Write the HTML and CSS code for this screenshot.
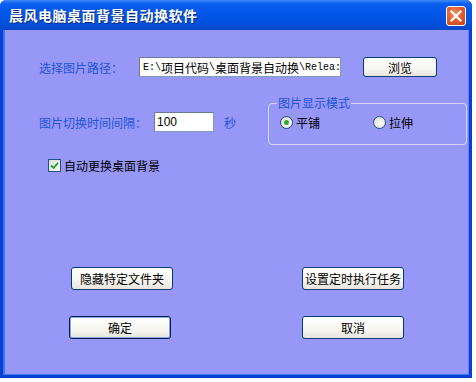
FILE: index.html
```html
<!DOCTYPE html>
<html lang="zh">
<head>
<meta charset="utf-8">
<link rel="stylesheet" href="styles.css">
</head>
<body>
<div class="window">
  <div class="titlebar">
    <span class="title">晨风电脑桌面背景自动换软件</span>
    <span class="close">
      <svg width="14" height="14" viewBox="0 0 14 14"><path d="M2.5 2.5 L11.5 11.5 M11.5 2.5 L2.5 11.5" stroke="#fff" stroke-width="2.2" stroke-linecap="square"/></svg>
    </span>
  </div>
  <div class="client">
    <div class="row1">
      <span class="label w-path">选择图片路径：</span>
      <div class="edit path"><span class="lat">E:\</span>项目代码<span class="lat">\</span>桌面背景自动换<span class="lat">\Relea:</span></div>
      <button class="btn browse">浏览</button>
    </div>
    <div class="row2">
      <div class="interval">
        <span class="label w-int">图片切换时间间隔：</span>
        <div class="edit num">100</div>
        <span class="label sec">秒</span>
      </div>
      <fieldset class="group">
        <legend>图片显示模式</legend>
        <label class="radio-item"><span class="radio on"></span>平铺</label>
        <label class="radio-item"><span class="radio"></span>拉伸</label>
      </fieldset>
    </div>
    <label class="check-row">
      <span class="checkbox"><svg width="9" height="9" viewBox="0 0 9 9"><path d="M1 4.5 L3.5 7 L8 1.8" fill="none" stroke="#21a121" stroke-width="1.8"/></svg></span>
      自动更换桌面背景
    </label>
    <div class="btn-row first">
      <button class="btn big">隐藏特定文件夹</button>
      <button class="btn big">设置定时执行任务</button>
    </div>
    <div class="btn-row second">
      <button class="btn big default">确定</button>
      <button class="btn big">取消</button>
    </div>
  </div>
</div>
</body>
</html>
```
FILE: styles.css
```css
html, body {
  margin: 0;
  padding: 0;
  background: #ffffff;
}
body {
  font-family: "Noto Sans CJK SC", "Liberation Sans", sans-serif;
  font-size: 12px;
}
.window {
  width: 472px;
  height: 378px;
  box-sizing: border-box;
  background: #0a3fd6;
  border-radius: 6px 6px 0 0;
  padding: 0 3px 3px 3px;
  display: flex;
  flex-direction: column;
}
.titlebar {
  height: 30px;
  flex: none;
  margin: 0 -3px;
  padding: 0 6px 0 9px;
  border-radius: 6px 6px 0 0;
  background: linear-gradient(#3d8cf7 0%, #0a5ff0 12%, #0055e8 50%, #004fd8 85%, #0a46c8 100%);
  display: flex;
  align-items: center;
  justify-content: space-between;
}
.title {
  color: #ffffff;
  font-weight: bold;
  font-size: 14px;
  letter-spacing: 0.5px;
  text-shadow: 1px 1px 0 #0a2a80;
}
.close {
  width: 20px;
  height: 20px;
  box-sizing: border-box;
  border: 1px solid #ffffff;
  border-radius: 3px;
  background: radial-gradient(circle at 40% 35%, #f08a60 0%, #e2572b 55%, #c23c18 100%);
  display: flex;
  align-items: center;
  justify-content: center;
  margin-top: 2px;
}
.client {
  flex: 1;
  background: #9797f7;
  border-left: 2px solid #3a78ee;
  border-right: 1px solid #5a86f0;
  border-bottom: 1px solid #3a78ee;
  padding-left: 34px;
  display: flex;
  flex-direction: column;
}
.label {
  color: #1f55d8;
  white-space: nowrap;
}
.row1 {
  margin-top: 27px;
  height: 20px;
  display: flex;
  align-items: center;
}
.w-path { width: 100px; }
.edit {
  background: #ffffff;
  height: 20px;
  box-sizing: border-box;
  border: 1px solid #7f9db9;
  border-top-color: #6a7a98;
  border-left-color: #6a7a98;
  display: flex;
  align-items: center;
  color: #000;
  white-space: nowrap;
  overflow: hidden;
}
.path {
  width: 202px;
  padding-left: 3px;
}
.lat {
  font-family: "Liberation Mono", monospace;
  font-size: 10px;
}
.btn {
  font-family: "Noto Sans CJK SC", sans-serif;
  font-size: 12px;
  color: #000;
  background: linear-gradient(#ffffff 0%, #f6f6f0 60%, #e6e4dc 100%);
  border: 1px solid #003c74;
  border-radius: 3px;
  padding: 0;
  box-sizing: border-box;
}
.browse {
  width: 74px;
  height: 20px;
  margin-left: 22px;
}
.row2 {
  margin-top: 24px;
  display: flex;
  align-items: flex-start;
}
.interval {
  margin-top: 11px;
  height: 20px;
  display: flex;
  align-items: center;
}
.w-int { width: 115px; }
.num {
  width: 60px;
  padding-left: 2px;
  font-family: "Liberation Sans", sans-serif;
}
.sec { margin-left: 10px; }
.group {
  margin: -5px 0 0 32px;
  width: 167px;
  height: 49px;
  box-sizing: border-box;
  border: 1px solid #d4d4ee;
  border-radius: 4px;
  padding: 5px 0 0 11px;
  display: flex;
  align-items: flex-start;
}
.group legend {
  color: #1f55d8;
  padding: 0 1px;
  margin-left: -3px;
  line-height: 14px;
}
.radio-item {
  display: flex;
  align-items: center;
  gap: 3px;
  width: 93px;
  height: 14px;
  color: #000;
}
.radio {
  width: 11px;
  height: 11px;
  border-radius: 50%;
  border: 1px solid #1c5180;
  background: radial-gradient(circle at 60% 60%, #ffffff 0%, #e8e8e0 60%, #c8c8c0 100%);
  display: flex;
  align-items: center;
  justify-content: center;
}
.radio.on::after {
  content: "";
  width: 5px;
  height: 5px;
  border-radius: 50%;
  background: #2fa82f;
}
.check-row {
  margin-top: 14px;
  margin-left: 9px;
  display: flex;
  align-items: center;
  gap: 3px;
  height: 13px;
  color: #000;
}
.checkbox {
  width: 13px;
  height: 13px;
  box-sizing: border-box;
  border: 1px solid #1c5180;
  background: linear-gradient(135deg, #dcdcd4, #ffffff);
  display: flex;
  align-items: center;
  justify-content: center;
}
.btn-row {
  display: flex;
  height: 23px;
}
.btn-row.first {
  margin-top: 95px;
  padding-left: 32px;
  gap: 129px;
}
.btn-row.second {
  margin-top: 26px;
  padding-left: 30px;
  gap: 131px;
}
.big {
  width: 102px;
  height: 23px;
}
.default {
  box-shadow: inset 0 0 0 1px #8aa8e8;
  border: 1px solid #001c54;
}
```
